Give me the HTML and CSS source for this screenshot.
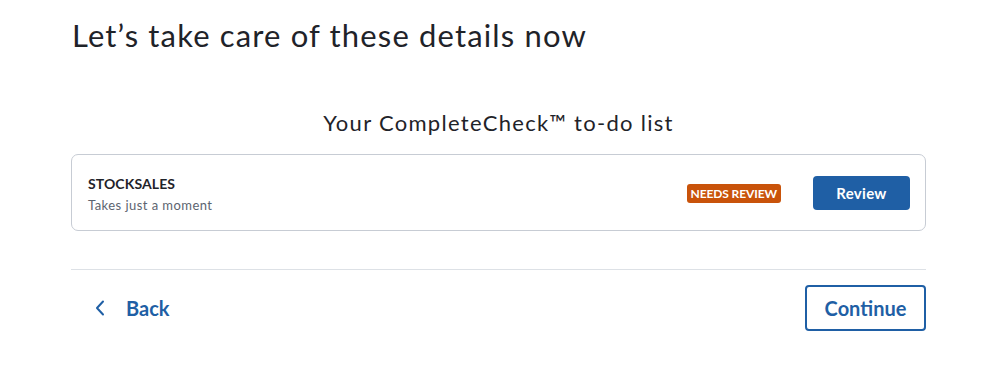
FILE: index.html
```html
<!DOCTYPE html>
<html>
<head>
<meta charset="utf-8">
<link rel="stylesheet" href="styles.css">
</head>
<body>
<main class="page">
  <h1 class="title">Let’s take care of these details now</h1>
  <h2 class="subtitle">Your CompleteCheck™ to-do list</h2>
  <section class="card">
    <div class="card-text">
      <div class="card-name">STOCKSALES</div>
      <div class="card-desc">Takes just a moment</div>
    </div>
    <div class="card-actions">
      <span class="badge">NEEDS REVIEW</span>
      <button class="btn-primary">Review</button>
    </div>
  </section>
  <hr class="divider">
  <nav class="footer">
    <a class="back" href="#">
      <svg class="chev" width="10" height="16" viewBox="0 0 10 16"><path d="M8 1.5 L2 8 L8 14.5" fill="none" stroke="#1f5fa5" stroke-width="2" stroke-linecap="round" stroke-linejoin="round"/></svg>
      <span>Back</span>
    </a>
    <button class="btn-outline">Continue</button>
  </nav>
</main>
</body>
</html>
```
FILE: styles.css
```css
* { box-sizing: border-box; }
body {
  margin: 0;
  background: #fff;
  font-family: Lato, "Noto Sans", sans-serif;
  color: #1f2329;
}
.page {
  width: 855px;
  margin-left: 71px;
  padding-top: 15px;
}
.title {
  margin: 0 0 0 1px;
  font-size: 31px;
  font-weight: 400;
  line-height: 40px;
  letter-spacing: 1.15px;
}
.subtitle {
  margin: 53px 0 0 0;
  text-align: center;
  font-size: 22px;
  font-weight: 400;
  line-height: 30px;
  letter-spacing: 1.3px;
}
.card {
  margin-top: 16px;
  height: 77px;
  border: 1px solid #c7ccd4;
  border-radius: 7px;
  display: flex;
  align-items: center;
  justify-content: space-between;
  padding: 0 15px 0 16px;
}
.card-text { display: flex; flex-direction: column; gap: 4px; padding-top: 3px; }
.card-name { font-size: 14px; font-weight: 700; letter-spacing: 0.1px; line-height: 18px; }
.card-desc { font-size: 13px; color: #5c6470; line-height: 17px; letter-spacing: 0.45px; }
.card-actions { display: flex; align-items: center; gap: 32px; }
.badge {
  background: #c9530a;
  color: #fff;
  font-size: 12px;
  font-weight: 700;
  padding: 2px 4px;
  border-radius: 3px;
  line-height: 15px;
  letter-spacing: -0.1px;
  margin-top: 2px;
}
.btn-primary {
  width: 97px;
  height: 34px;
  background: #1f5fa5;
  color: #fff;
  border: none;
  border-radius: 4px;
  font-family: inherit;
  font-size: 15px;
  font-weight: 700;
  letter-spacing: 0.3px;
}
.divider {
  margin: 38px 0 0 0;
  border: none;
  border-top: 1px solid #dde1e6;
}
.footer {
  margin-top: 15px;
  display: flex;
  justify-content: space-between;
  align-items: center;
}
.back {
  display: flex;
  align-items: center;
  gap: 21px;
  padding-left: 24px;
  color: #1f5fa5;
  text-decoration: none;
  font-size: 20px;
  font-weight: 700;
}
.chev { display: block; }
.btn-outline {
  width: 121px;
  height: 46px;
  background: #fff;
  color: #1f5fa5;
  border: 2px solid #1f5fa5;
  border-radius: 4px;
  font-family: inherit;
  font-size: 20px;
  font-weight: 700;
}
```
